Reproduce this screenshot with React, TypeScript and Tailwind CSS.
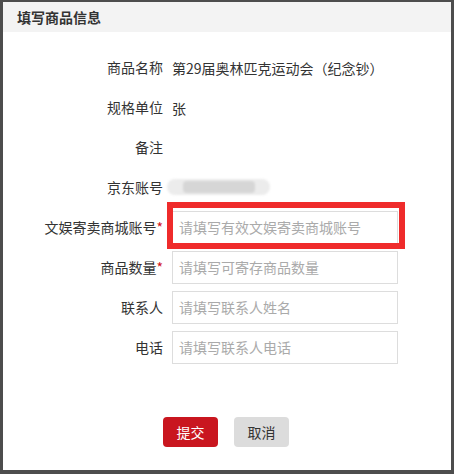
const font = { fontFamily: '"Microsoft YaHei", "Noto Sans CJK SC", sans-serif' };

type Row = { label: string; required?: boolean; value?: string; placeholder?: string; blur?: boolean; mark?: boolean };

const rows: Row[] = [
  { label: '商品名称', value: '第29届奥林匹克运动会（纪念钞）' },
  { label: '规格单位', value: '张' },
  { label: '备注', value: '' },
  { label: '京东账号', blur: true },
  { label: '文娱寄卖商城账号', required: true, placeholder: '请填写有效文娱寄卖商城账号', mark: true },
  { label: '商品数量', required: true, placeholder: '请填写可寄存商品数量' },
  { label: '联系人', placeholder: '请填写联系人姓名' },
  { label: '电话', placeholder: '请填写联系人电话' },
];

function FieldRow({ row }: { row: Row }) {
  return (
    <div className="flex h-10 items-center">
      <div className="w-[160px] text-right text-[14px] text-[#333]">
        {row.label}
        {row.required && <span className="text-[#d0111b]">*</span>}
      </div>
      <div className="ml-[9px] flex-1">
        {row.placeholder ? (
          <div className="relative w-[226px]">
            <input
              className="h-[33px] w-full border border-[#ddd] bg-white px-[6px] text-[14px] text-[#333] outline-none placeholder:text-[#aaa]"
              placeholder={row.placeholder}
              style={font}
            />
            {row.mark && (
              <div className="pointer-events-none absolute left-[-5px] top-[-9px] h-[47px] w-[238px] border-[6px] border-[#ef2b2b]" />
            )}
          </div>
        ) : row.blur ? (
          <div className="ml-[-5px] flex h-4 w-[103px] items-center rounded-full bg-[#ececec] blur-[1px]">
            <div className="mx-auto h-3 w-[72px] rounded bg-[#d6d6d6]" />
          </div>
        ) : (
          <span className="text-[14px] text-[#333]">{row.value}</span>
        )}
      </div>
    </div>
  );
}

export default function App() {
  return (
    <div className="h-[474px] w-[454px] bg-white" style={font}>
      <div className="flex h-full flex-col border-b-4 border-l-[3px] border-r-[3px] border-t-2 border-[#4d4d4d]">
        <div className="flex h-[30px] items-center bg-[#f3f3f3] pl-[14px] text-[14px] font-bold text-[#333]">
          填写商品信息
        </div>
        <div className="pt-[15px]">
          {rows.map((r) => (
            <FieldRow key={r.label} row={r} />
          ))}
        </div>
        <div className="mt-[50px] flex pl-[160px] gap-4">
          <button className="h-[30px] w-[55px] rounded bg-[#c9161f] text-[14px] text-white">提交</button>
          <button className="h-[30px] w-[55px] rounded bg-[#dcdcdc] text-[14px] text-[#333]">取消</button>
        </div>
      </div>
    </div>
  );
}
